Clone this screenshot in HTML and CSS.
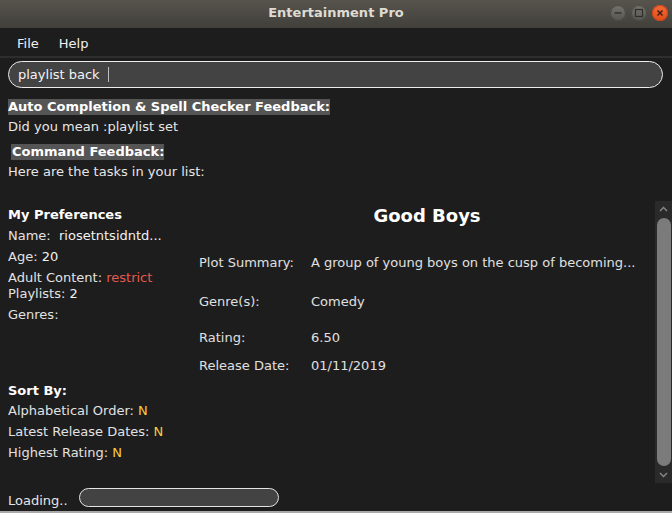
FILE: index.html
```html
<!DOCTYPE html>
<html>
<head>
<meta charset="utf-8">
<title>Entertainment Pro</title>
<link rel="stylesheet" href="styles.css">
</head>
<body>
<div class="window">
  <header class="titlebar">
    <span class="title">Entertainment Pro</span>
    <div class="controls">
      <span class="wbtn minimize"><svg width="16" height="16" viewBox="0 0 16 16"><line x1="4.5" y1="8" x2="11.5" y2="8" stroke="#2f2e2a" stroke-width="1.4"/></svg></span>
      <span class="wbtn maximize"><svg width="16" height="16" viewBox="0 0 16 16"><rect x="4.5" y="4.5" width="7" height="7" fill="none" stroke="#2f2e2a" stroke-width="1.2"/></svg></span>
      <span class="wbtn close"><svg width="16" height="16" viewBox="0 0 16 16"><path d="M5.5 5.5 L10.5 10.5 M10.5 5.5 L5.5 10.5" stroke="#3a1a0c" stroke-width="1.4"/></svg></span>
    </div>
  </header>
  <nav class="menubar">
    <span class="menu-item">File</span>
    <span class="menu-item">Help</span>
  </nav>
  <main class="content">
    <div class="command-box"><span class="command-text">playlist back</span><span class="caret"></span></div>
    <section class="feedback">
      <div class="fb-title">Auto Completion &amp; Spell Checker Feedback:</div>
      <div class="fb-text first">Did you mean :playlist set</div>
      <div class="fb-title second">Command Feedback:</div>
      <div class="fb-text last">Here are the tasks in your list:</div>
    </section>
    <div class="panes">
      <aside class="prefs">
        <div class="pref-head">My Preferences</div>
        <div class="pref-row">Name:&nbsp; <span class="val">riosetntsidntd...</span></div>
        <div class="pref-row">Age: <span class="val">20</span></div>
        <div class="pref-row">Adult Content: <span class="val red">restrict</span></div>
        <div class="pref-row tight">Playlists: <span class="val">2</span></div>
        <div class="pref-row">Genres:</div>
        <div class="pref-head sort">Sort By:</div>
        <div class="pref-row s1">Alphabetical Order: <span class="val yellow">N</span></div>
        <div class="pref-row">Latest Release Dates: <span class="val yellow">N</span></div>
        <div class="pref-row">Highest Rating: <span class="val yellow">N</span></div>
      </aside>
      <section class="details">
        <h1 class="movie-title">Good Boys</h1>
        <div class="detail-grid">
          <span class="label">Plot Summary:</span><span class="value">A group of young boys on the cusp of becoming...</span>
          <span class="label">Genre(s):</span><span class="value">Comedy</span>
          <span class="label">Rating:</span><span class="value">6.50</span>
          <span class="label">Release Date:</span><span class="value">01/11/2019</span>
        </div>
      </section>
      <div class="scrollbar">
        <div class="sb-arrow"><svg width="17" height="17" viewBox="0 0 17 17"><path d="M5 10 L8.5 6.5 L12 10" fill="none" stroke="#8a8a8a" stroke-width="1.3"/></svg></div>
        <div class="sb-track"><div class="sb-thumb"></div></div>
        <div class="sb-arrow"><svg width="17" height="17" viewBox="0 0 17 17"><path d="M5 7 L8.5 10.5 L12 7" fill="none" stroke="#8a8a8a" stroke-width="1.3"/></svg></div>
      </div>
    </div>
    <footer class="status">
      <span class="status-text">Loading..</span>
      <div class="progress"></div>
    </footer>
  </main>
  <div class="bottom-edge"></div>
</div>
</body>
</html>
```
FILE: styles.css
```css
* { box-sizing: border-box; }
html, body { margin: 0; padding: 0; }
body {
  width: 672px;
  height: 513px;
  overflow: hidden;
  background: #1d1d1d;
  font-family: "DejaVu Sans", sans-serif;
  font-size: 13px;
  color: #e6e6e6;
}
.window {
  display: flex;
  flex-direction: column;
  width: 672px;
  height: 513px;
  background: #1d1d1d;
}
.titlebar {
  height: 28px;
  flex: none;
  display: flex;
  align-items: center;
  justify-content: center;
  position: relative;
  background: linear-gradient(#57544e, #403f3a);
}
.title {
  font-weight: bold;
  font-size: 13px;
  color: #dfdbd2;
  margin-top: -4px;
}
.controls {
  position: absolute;
  right: 4px;
  top: 5px;
  display: flex;
  gap: 5px;
}
.wbtn {
  width: 16px;
  height: 16px;
  border-radius: 50%;
  display: flex;
  background: linear-gradient(#75736d, #56554f);
  box-shadow: inset 0 0 0 1px #4a4944;
}
.wbtn.close {
  background: linear-gradient(#f26b3a, #df4c16);
  box-shadow: inset 0 0 0 1px #c4461a;
}
.menubar {
  height: 30px;
  flex: none;
  display: flex;
  align-items: center;
  gap: 20px;
  padding: 2px 0 0 17px;
  background: #1d1d1d;
  border-bottom: 2px solid #2e2e2e;
}
.menu-item { color: #f0f0f0; }
.content {
  flex: 1;
  display: flex;
  flex-direction: column;
  padding: 3px 0 0 8px;
}
.command-box {
  width: 655px;
  height: 27px;
  flex: none;
  border: 1.5px solid #ececec;
  border-radius: 14px;
  background: #434343;
  display: flex;
  align-items: center;
  padding-left: 9px;
  color: #f4f4f4;
}
.caret {
  display: inline-block;
  width: 1px;
  height: 15px;
  background: #bdbdbd;
  margin-left: 8px;
}
.feedback {
  display: flex;
  flex-direction: column;
  align-items: flex-start;
  margin-top: 11px;
}
.fb-title {
  font-weight: bold;
  color: #ffffff;
  background: #555555;
  line-height: 16px;
}
.fb-title.second {
  margin-top: 9px;
  margin-left: 3px;
  padding-left: 1px;
}
.fb-text { line-height: 16px; }
.fb-text.first { margin-top: 4px; }
.fb-text.last { margin-top: 4px; }
.panes {
  margin-top: 21px;
  height: 282px;
  flex: none;
  display: flex;
}
.prefs {
  width: 191px;
  flex: none;
  display: flex;
  flex-direction: column;
  gap: 5px;
  padding-top: 6px;
}
.pref-head {
  font-weight: bold;
  color: #ffffff;
  line-height: 16px;
}
.pref-head.sort { margin-top: 55px; }
.pref-row {
  line-height: 16px;
  color: #e2e2e2;
}
.pref-row.tight { margin-top: -5px; }
.pref-row.s1 { margin-top: -1px; }
.val { color: #f2f2f2; }
.val.red { color: #e25a4e; }
.val.yellow { color: #f7cc40; }
.details {
  flex: 1;
  display: flex;
  flex-direction: column;
  padding-top: 1px;
}
.movie-title {
  margin: 0;
  height: 28px;
  line-height: 28px;
  text-align: center;
  font-size: 18px;
  font-weight: bold;
  color: #ffffff;
}
.detail-grid {
  display: grid;
  grid-template-columns: 112px 1fr;
  grid-template-rows: 41px 39px 36px 28px;
  align-items: end;
  line-height: 16px;
  color: #e0e0e0;
}
.scrollbar {
  width: 17px;
  flex: none;
  background: #2a2a2a;
  display: flex;
  flex-direction: column;
}
.sb-arrow { height: 17px; flex: none; display: flex; }
.sb-track {
  flex: 1;
  padding: 0 1px 0 2px;
}
.sb-thumb {
  height: 100%;
  background: #7b7b7b;
  border-radius: 7px;
}
.status {
  flex: 1;
  display: flex;
  align-items: flex-start;
  gap: 11px;
}
.status-text {
  color: #e6e6e6;
  line-height: 16px;
  margin-top: 10px;
}
.progress {
  width: 200px;
  height: 19px;
  margin-top: 5px;
  border: 1.5px solid #e4e4e4;
  border-radius: 10px;
  background: #434343;
}
.bottom-edge {
  height: 2px;
  flex: none;
  background: #a9a9a9;
}
```
